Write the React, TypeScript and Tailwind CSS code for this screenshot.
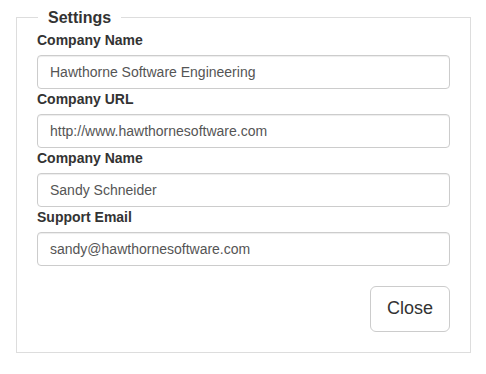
const fields = [
  { label: "Company Name", value: "Hawthorne Software Engineering" },
  { label: "Company URL", value: "http://www.hawthornesoftware.com" },
  { label: "Company Name", value: "Sandy Schneider" },
  { label: "Support Email", value: "sandy@hawthornesoftware.com" },
];

export default function App() {
  return (
    <div className="h-[374px] w-[486px] bg-white pt-[6px] font-['Liberation_Sans',Arial,sans-serif] text-[#333]">
      <fieldset className="ml-4 mr-[15px] border border-[#ddd] px-5 pb-5 pt-[2px]">
        <legend className="ml-px px-[10px] pt-[2px] text-base font-bold leading-5">
          Settings
        </legend>
        {fields.map((f, i) => (
          <div key={i}>
            <label className="mb-[5px] block text-sm font-bold leading-5">
              {f.label}
            </label>
            <input
              type="text"
              defaultValue={f.value}
              className="block h-[34px] w-full rounded border border-[#ccc] px-3 text-sm text-[#555] shadow-[inset_0_1px_1px_rgba(0,0,0,0.075)] outline-none"
            />
          </div>
        ))}
        <div className="mt-5 flex justify-end">
          <button
            type="button"
            className="h-[46px] rounded-md border border-[#ccc] bg-white px-4 text-lg leading-[1.33] text-[#333]"
          >
            Close
          </button>
        </div>
      </fieldset>
    </div>
  );
}
